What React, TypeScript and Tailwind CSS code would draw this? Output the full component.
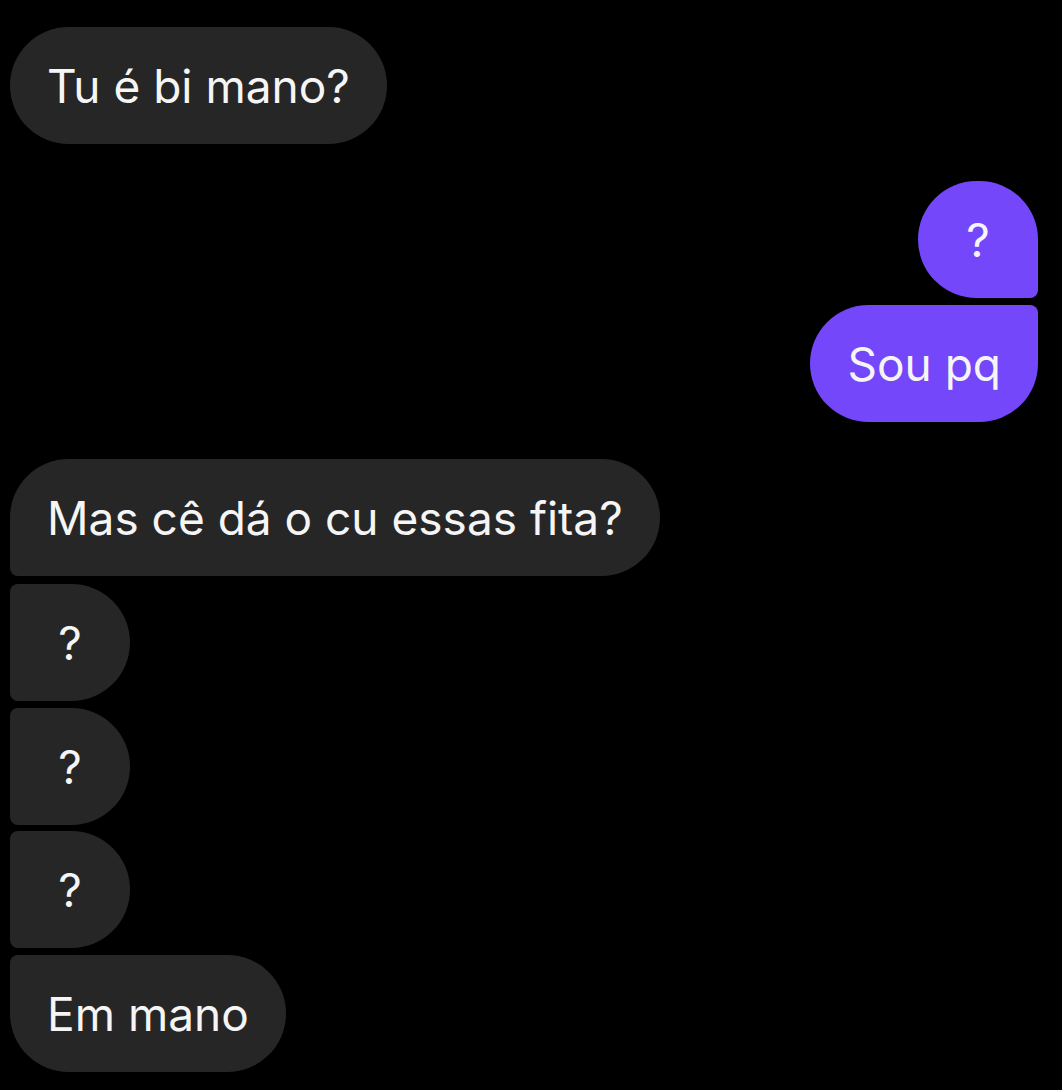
import React from 'react';

type Msg = {
  id: number;
  text: string;
  mine: boolean;
  shape: string;
};

const messages: Msg[] = [
  { id: 1, text: 'Tu é bi mano?', mine: false, shape: 'rounded-[59px]' },
  { id: 2, text: '?', mine: true, shape: 'rounded-[59px] rounded-br-[8px]' },
  { id: 3, text: 'Sou pq', mine: true, shape: 'rounded-[59px] rounded-tr-[8px]' },
  { id: 4, text: 'Mas cê dá o cu essas fita?', mine: false, shape: 'rounded-[59px] rounded-bl-[8px]' },
  { id: 5, text: '?', mine: false, shape: 'rounded-[59px] rounded-l-[8px]' },
  { id: 6, text: '?', mine: false, shape: 'rounded-[59px] rounded-l-[8px]' },
  { id: 7, text: '?', mine: false, shape: 'rounded-[59px] rounded-l-[8px]' },
  { id: 8, text: 'Em mano', mine: false, shape: 'rounded-[59px] rounded-tl-[8px]' },
];

// spacing after each message, groups are separated by a larger gap
const gapAfter: Record<number, string> = {
  1: 'mb-[37px]',
  2: 'mb-[7px]',
  3: 'mb-[37px]',
  4: 'mb-[8px]',
  5: 'mb-[7px]',
  6: 'mb-[6px]',
  7: 'mb-[7px]',
  8: 'mb-0',
};

const Bubble: React.FC<{ msg: Msg }> = ({ msg }) => {
  const short = msg.text.length === 1;
  return (
    <div className={`flex ${msg.mine ? 'justify-end' : 'justify-start'} ${gapAfter[msg.id]}`}>
      <div
        className={`h-[117px] flex items-center text-[46px] leading-none text-[#f5f5f5] ${msg.shape} ${
          short ? 'w-[120px] justify-center' : 'px-[37px]'
        } ${msg.mine ? 'bg-[#7547fb]' : 'bg-[#262626]'}`}
      >
        {msg.text}
      </div>
    </div>
  );
};

export default function App() {
  return (
    <div
      className="min-h-[1090px] w-full bg-black pt-[27px] pl-[10px] pr-[24px]"
      style={{ fontFamily: 'Inter, "Noto Sans", sans-serif' }}
    >
      {messages.map((m) => (
        <Bubble key={m.id} msg={m} />
      ))}
    </div>
  );
}
